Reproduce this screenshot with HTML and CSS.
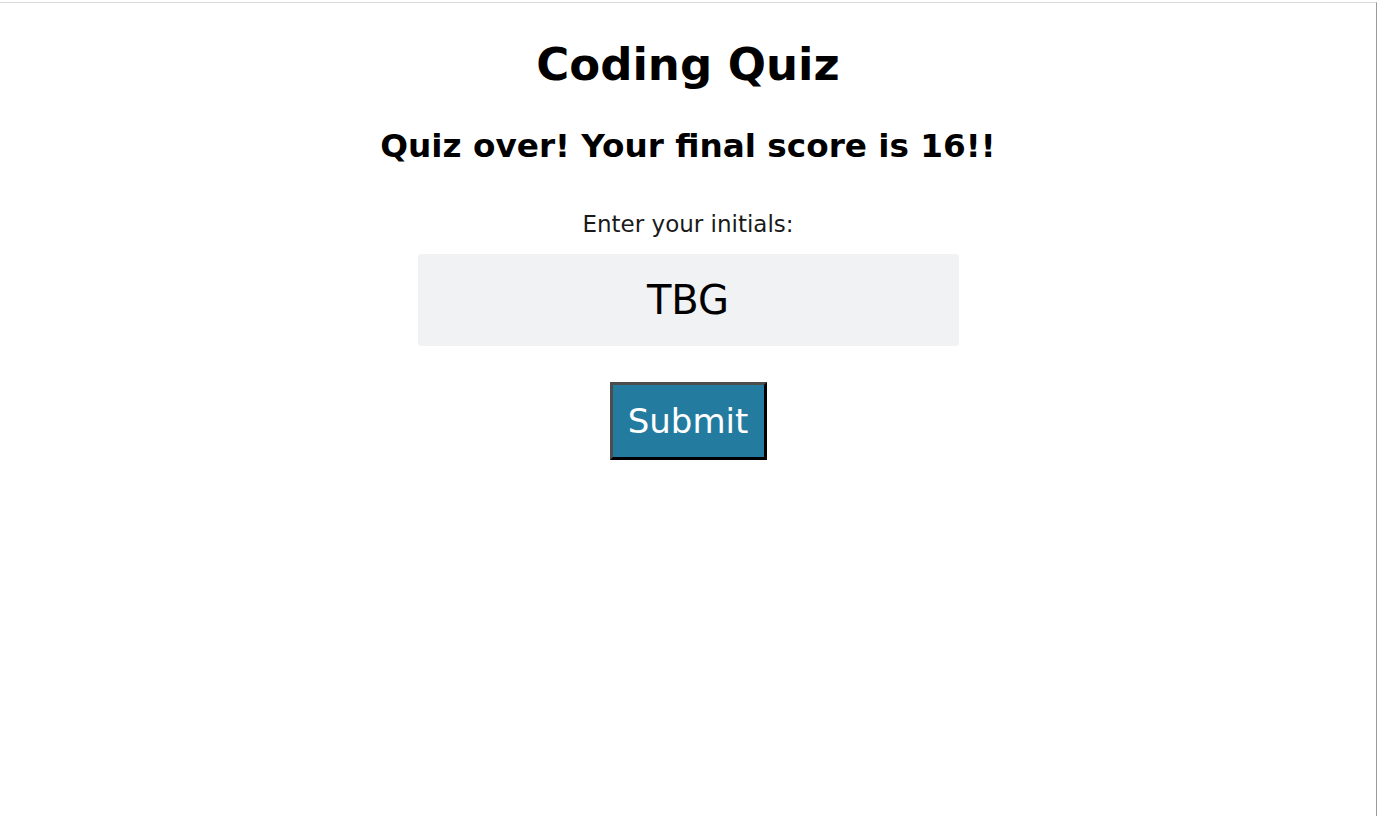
FILE: index.html
```html
<!DOCTYPE html>
<html lang="en">
<head>
<meta charset="utf-8">
<title>Coding Quiz</title>
<link rel="stylesheet" href="styles.css">
</head>
<body>
<div class="frame">
  <main class="quiz">
    <h1 class="title">Coding Quiz</h1>
    <h2 class="result">Quiz over! Your final score is 16!!</h2>
    <form class="entry">
      <label class="entry-label" for="initials">Enter your initials:</label>
      <input class="entry-input" id="initials" type="text" value="TBG">
      <button class="entry-submit" type="button">Submit</button>
    </form>
  </main>
</div>
</body>
</html>
```

FILE: styles.css
```css
html, body {
  margin: 0;
  padding: 0;
  background: #ffffff;
}

body {
  font-family: "DejaVu Sans", sans-serif;
  color: #000;
}

.frame {
  margin-top: 2px;
  border-top: 1px solid #dcdcdc;
  border-right: 1px solid #9a9a9a;
  width: 1377px;
  height: 814px;
  box-sizing: border-box;
}

.quiz {
  display: flex;
  flex-direction: column;
  align-items: center;
}

.title {
  margin: 30px 0 0;
  font-size: 45px;
  line-height: 64px;
  font-weight: bold;
}

.result {
  margin: 27px 0 0;
  font-size: 32.7px;
  line-height: 44px;
  font-weight: bold;
}

.entry {
  display: flex;
  flex-direction: column;
  align-items: center;
  margin-top: 40px;
}

.entry-label {
  font-size: 23px;
  line-height: 32px;
  color: #1a1a1a;
}

.entry-input {
  margin-top: 14px;
  width: 541px;
  height: 92px;
  box-sizing: border-box;
  border: none;
  border-radius: 3px;
  background: #f1f2f4;
  font-family: "DejaVu Sans", sans-serif;
  font-size: 40px;
  text-align: center;
  color: #000;
  padding: 0;
  outline: none;
}

.entry-submit {
  margin-top: 36px;
  width: 157px;
  height: 78px;
  box-sizing: border-box;
  background: #237ca0;
  color: #fff;
  font-family: "DejaVu Sans", sans-serif;
  font-size: 34px;
  border-style: solid;
  border-width: 3px;
  border-color: #4d4d4d #000 #000 #4d4d4d;
  padding: 0;
}
```
